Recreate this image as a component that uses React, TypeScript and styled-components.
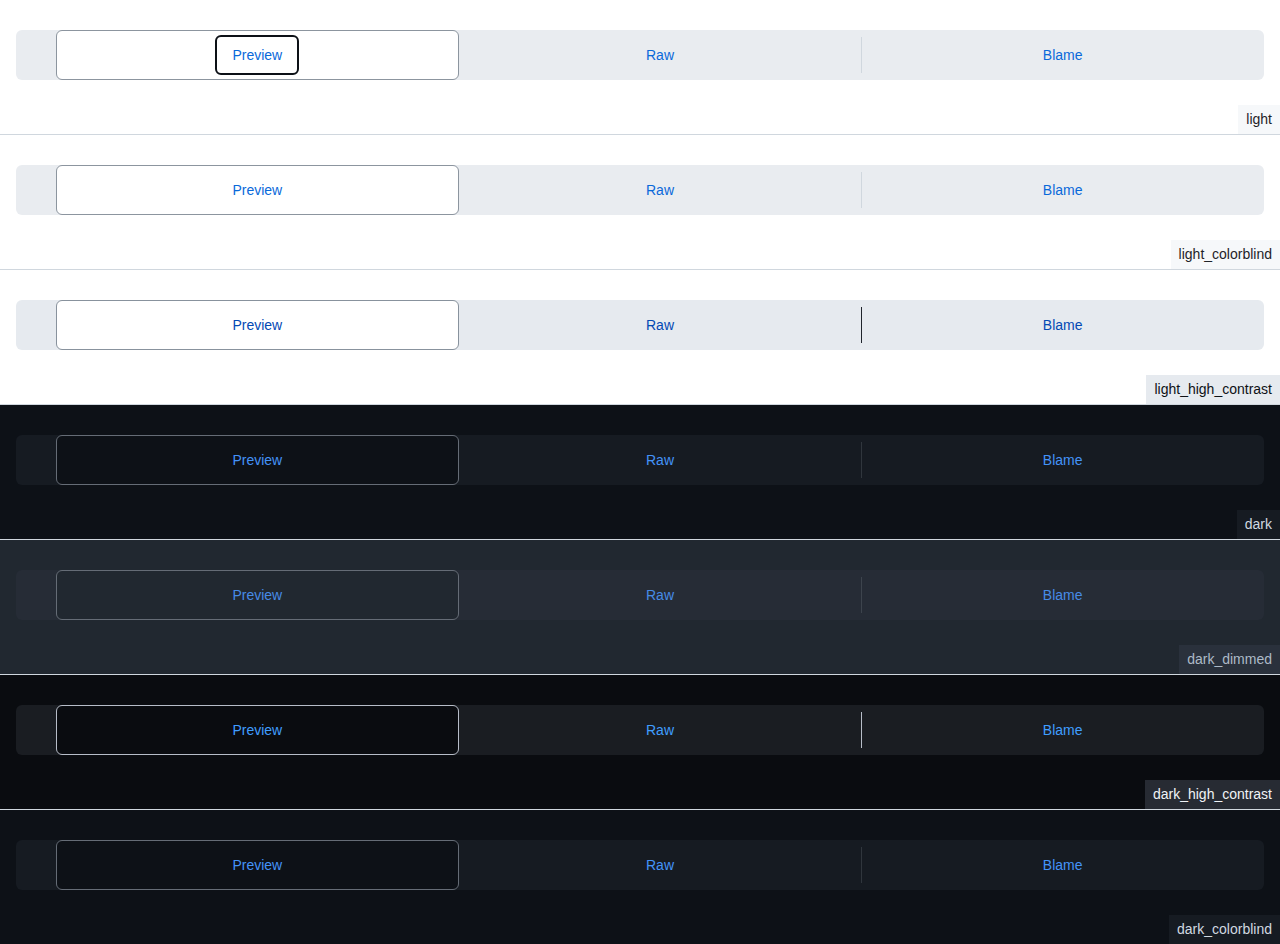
import styled, { createGlobalStyle } from "styled-components";

const GlobalStyle = createGlobalStyle`
  body {
    margin: 0;
    font-family: "Liberation Sans", Arial, sans-serif;
    font-size: 14px;
  }
`;

interface Palette {
  page: string;
  control: string;
  selectedBg: string;
  selectedBorder: string;
  fg: string;
  divider: string;
  labelBg: string;
  labelFg: string;
}

const light: Palette = {
  page: "#ffffff",
  control: "#e9ecf0",
  selectedBg: "#ffffff",
  selectedBorder: "#8c959f",
  fg: "#0969da",
  divider: "#d0d7de",
  labelBg: "#f6f8fa",
  labelFg: "#1f2328",
};

const dark: Palette = {
  page: "#0d1117",
  control: "#161b22",
  selectedBg: "#0d1117",
  selectedBorder: "#656c76",
  fg: "#4493f8",
  divider: "#30363d",
  labelBg: "#161b22",
  labelFg: "#d1d9e0",
};

const themes: { name: string; colors: Palette; focused?: boolean }[] = [
  { name: "light", colors: light, focused: true },
  { name: "light_colorblind", colors: light },
  {
    name: "light_high_contrast",
    colors: {
      ...light,
      control: "#e6eaef",
      selectedBorder: "#88929d",
      fg: "#0349b4",
      divider: "#20252c",
      labelBg: "#e6eaef",
      labelFg: "#0e1116",
    },
  },
  { name: "dark", colors: dark },
  {
    name: "dark_dimmed",
    colors: {
      page: "#212830",
      control: "#262c36",
      selectedBg: "#212830",
      selectedBorder: "#656c76",
      fg: "#478be6",
      divider: "#3d444d",
      labelBg: "#2a313c",
      labelFg: "#adbac7",
    },
  },
  {
    name: "dark_high_contrast",
    colors: {
      page: "#0a0c10",
      control: "#1a1d22",
      selectedBg: "#0a0c10",
      selectedBorder: "#b7bdc8",
      fg: "#409eff",
      divider: "#b7bdc8",
      labelBg: "#272b33",
      labelFg: "#f0f3f6",
    },
  },
  { name: "dark_colorblind", colors: dark },
];

const Section = styled.section<{ $c: Palette }>`
  box-sizing: border-box;
  height: 135px;
  display: flex;
  flex-direction: column;
  padding-top: 30px;
  background: ${(p) => p.$c.page};
  border-bottom: 1px solid #d0d7de;
`;

const Control = styled.div<{ $c: Palette }>`
  display: flex;
  height: 50px;
  margin: 0 16px;
  border-radius: 6px;
  background: ${(p) => p.$c.control};
`;

const Spacer = styled.div`
  width: 40px;
  flex-shrink: 0;
`;

const Segment = styled.div<{ $c: Palette; $selected?: boolean; $divider?: boolean }>`
  position: relative;
  flex: 1;
  display: flex;
  align-items: center;
  justify-content: center;
  box-sizing: border-box;
  border-radius: 6px;
  color: ${(p) => p.$c.fg};
  border: 1px solid ${(p) => (p.$selected ? p.$c.selectedBorder : "transparent")};
  background: ${(p) => (p.$selected ? p.$c.selectedBg : "transparent")};

  &::before {
    content: "";
    display: ${(p) => (p.$divider ? "block" : "none")};
    position: absolute;
    left: -1px;
    top: 6px;
    bottom: 6px;
    width: 1px;
    background: ${(p) => p.$c.divider};
  }
`;

const SegmentText = styled.span<{ $focused?: boolean }>`
  box-sizing: border-box;
  height: 40px;
  padding: 0 15px;
  display: flex;
  align-items: center;
  border-radius: 6px;
  border: 2px solid ${(p) => (p.$focused ? "#0d1117" : "transparent")};
`;

const ThemeLabel = styled.div<{ $c: Palette }>`
  align-self: flex-end;
  margin-top: auto;
  padding: 4px 8px;
  line-height: 21px;
  background: ${(p) => p.$c.labelBg};
  color: ${(p) => p.$c.labelFg};
`;

export default function App() {
  return (
    <>
      <GlobalStyle />
      {themes.map((t) => (
        <Section key={t.name} $c={t.colors}>
          <Control $c={t.colors}>
            <Spacer />
            <Segment $c={t.colors} $selected>
              <SegmentText $focused={t.focused}>Preview</SegmentText>
            </Segment>
            <Segment $c={t.colors}>
              <SegmentText>Raw</SegmentText>
            </Segment>
            <Segment $c={t.colors} $divider>
              <SegmentText>Blame</SegmentText>
            </Segment>
          </Control>
          <ThemeLabel $c={t.colors}>{t.name}</ThemeLabel>
        </Section>
      ))}
    </>
  );
}
